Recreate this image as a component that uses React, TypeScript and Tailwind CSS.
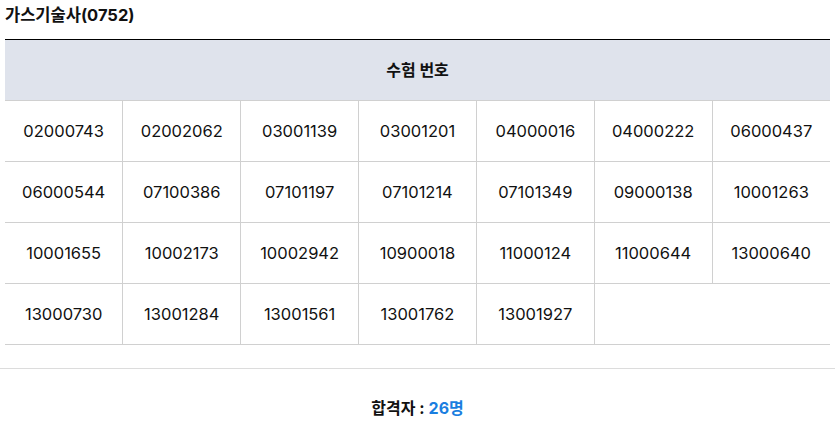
const numbers = [
  "02000743", "02002062", "03001139", "03001201", "04000016", "04000222", "06000437",
  "06000544", "07100386", "07101197", "07101214", "07101349", "09000138", "10001263",
  "10001655", "10002173", "10002942", "10900018", "11000124", "11000644", "13000640",
  "13000730", "13001284", "13001561", "13001762", "13001927",
];

const font = { fontFamily: "Inter, 'Noto Sans CJK KR', sans-serif" };

export default function App() {
  const rows: string[][] = [];
  for (let i = 0; i < numbers.length; i += 7) rows.push(numbers.slice(i, i + 7));

  return (
    <div className="w-[835px] bg-white text-[#111]" style={font}>
      <div className="px-[5px]">
        <h2 className="h-[39px] pt-[4px] text-[16.5px] font-bold leading-[22px]">가스기술사(0752)</h2>
        <table className="w-full table-fixed border-collapse border-t border-black">
          <thead>
            <tr>
              <th
                colSpan={7}
                className="h-[61px] bg-[#dfe3ec] border-b border-[#d0d0d0] text-[16px] font-bold"
              >
                수험 번호
              </th>
            </tr>
          </thead>
          <tbody>
            {rows.map((row, ri) => (
              <tr key={ri}>
                {row.map((n, ci) => (
                  <td
                    key={n}
                    className={
                      "h-[61px] text-center text-[16.5px] border-b border-[#d0d0d0] " +
                      (ci < 6 ? "border-r" : "")
                    }
                  >
                    {n}
                  </td>
                ))}
                {row.length < 7 && (
                  <td colSpan={7 - row.length} className="h-[61px] border-b border-[#d0d0d0]" />
                )}
              </tr>
            ))}
          </tbody>
        </table>
      </div>
      <div className="mt-[23px] border-t border-[#dcdcdc] h-[78px] flex items-center justify-center text-[16px] font-bold">
        합격자 : <span className="ml-1 text-[#1a7ee0]">26명</span>
      </div>
    </div>
  );
}
